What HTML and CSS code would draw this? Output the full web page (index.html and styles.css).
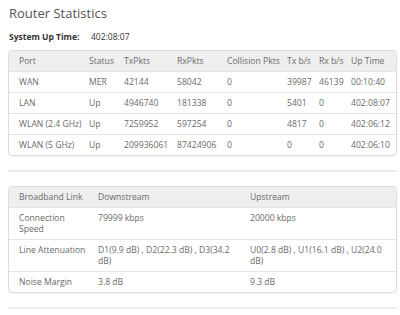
FILE: index.html
```html
<!DOCTYPE html>
<html lang="en">
<head>
    <meta charset="UTF-8">
    <title>Router Statistics</title>
    <link rel="stylesheet" href="styles.css">
</head>
<body>
    <main class="page">
        <h1 class="title">Router Statistics</h1>
        <p class="uptime"><span class="uptime-label">System Up Time:</span>402:08:07</p>

        <div class="box">
            <table class="stats">
                <colgroup>
                    <col class="c-port"><col class="c-status"><col class="c-tx"><col class="c-rx">
                    <col class="c-coll"><col class="c-txb"><col class="c-rxb"><col class="c-up">
                </colgroup>
                <thead>
                    <tr><th>Port</th><th>Status</th><th>TxPkts</th><th>RxPkts</th><th>Collision Pkts</th><th>Tx b/s</th><th>Rx b/s</th><th>Up Time</th></tr>
                </thead>
                <tbody>
                    <tr><td>WAN</td><td>MER</td><td>42144</td><td>58042</td><td>0</td><td>39987</td><td>46139</td><td>00:10:40</td></tr>
                    <tr><td>LAN</td><td>Up</td><td>4946740</td><td>181338</td><td>0</td><td>5401</td><td>0</td><td>402:08:07</td></tr>
                    <tr><td>WLAN (2.4 GHz)</td><td>Up</td><td>7259952</td><td>597254</td><td>0</td><td>4817</td><td>0</td><td>402:06:12</td></tr>
                    <tr><td>WLAN (5 GHz)</td><td>Up</td><td>209936061</td><td>87424906</td><td>0</td><td>0</td><td>0</td><td>402:06:10</td></tr>
                </tbody>
            </table>
        </div>

        <hr class="divider">

        <div class="box">
            <table class="stats link">
                <colgroup>
                    <col class="c-name"><col class="c-down"><col class="c-upst">
                </colgroup>
                <thead>
                    <tr><th>Broadband Link</th><th>Downstream</th><th>Upstream</th></tr>
                </thead>
                <tbody>
                    <tr><td>Connection Speed</td><td>79999 kbps</td><td>20000 kbps</td></tr>
                    <tr><td>Line Attenuation</td><td>D1(9.9 dB) , D2(22.3 dB) , D3(34.2 dB)</td><td>U0(2.8 dB) , U1(16.1 dB) , U2(24.0 dB)</td></tr>
                    <tr><td>Noise Margin</td><td>3.8 dB</td><td>9.3 dB</td></tr>
                </tbody>
            </table>
        </div>

        <hr class="divider">
    </main>
</body>
</html>
```

FILE: styles.css
```css
:root{
    --text: #6a6a6a;
    --title: #555;
    --dark: #333;
    --line: #e4e4e4;
    --border: #dcdcdc;
    --head: #efefef;
}
*,*::before,*::after{
    box-sizing: border-box;
    margin: 0;
    padding: 0;
}
body{
    background: #fff;
    font-family: 'Open Sans', sans-serif;
    color: var(--text);
}
.page{
    width: 389px;
    margin-left: 8px;
}
.title{
    font-size: 13px;
    font-weight: 400;
    line-height: 17px;
    padding-top: 5px;
    padding-left: 1px;
    color: var(--title);
}
.uptime{
    margin-top: 9px;
    padding-left: 1px;
    font-size: 8.5px;
    line-height: 12px;
    color: var(--dark);
}
.uptime-label{
    display: inline-block;
    width: 82px;
    font-weight: 700;
}
.box{
    margin-top: 7px;
    border: 1px solid var(--border);
    border-radius: 4px;
    overflow: hidden;
    box-shadow: 0 1px 1px rgba(0,0,0,0.04);
}
.stats{
    width: 100%;
    border-collapse: collapse;
    table-layout: fixed;
    font-size: 8.6px;
    line-height: 11px;
}
.stats th,
.stats td{
    text-align: left;
    font-weight: 400;
    padding: 5px 0 4px;
    vertical-align: top;
    color: var(--text);
    white-space: nowrap;
}
.stats thead th{
    background: var(--head);
}
.stats tbody td{
    border-top: 1px solid var(--line);
}
.stats th:first-child,
.stats td:first-child{
    padding-left: 10px;
}
.c-port{ width: 80px; }
.c-status{ width: 35px; }
.c-tx{ width: 53px; }
.c-rx{ width: 50px; }
.c-coll{ width: 60px; }
.c-txb{ width: 32px; }
.c-rxb{ width: 32px; }
.c-up{ width: 45px; }

.link th,
.link td{
    white-space: normal;
    padding-right: 8px;
}
.c-name{ width: 89px; }
.c-down{ width: 152px; }
.c-upst{ width: 146px; }

.divider{
    border: 0;
    height: 2px;
    background: #ececec;
    margin-top: 14px;
}
.divider + .box{
    margin-top: 14px;
}
```
